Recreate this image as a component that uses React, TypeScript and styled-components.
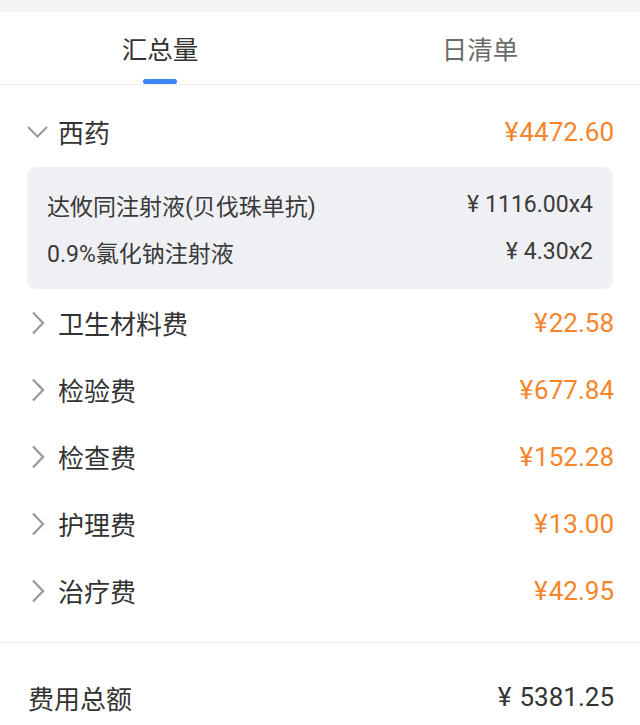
import React, { useState } from "react";
import styled, { createGlobalStyle } from "styled-components";

const GlobalStyle = createGlobalStyle`
  html, body { margin: 0; padding: 0; background: #ffffff; }
  body {
    font-family: "Roboto", "Noto Sans CJK SC", "Noto Sans", sans-serif;
    color: #333333;
    -webkit-font-smoothing: antialiased;
  }
  * { box-sizing: border-box; }
`;

const Page = styled.div`
  width: 640px;
  min-height: 725px;
  background: #ffffff;
  display: flex;
  flex-direction: column;
`;

const TopBand = styled.div`
  height: 12px;
  background: #f5f5f5;
`;

const Tabs = styled.div`
  display: grid;
  grid-template-columns: 1fr 1fr;
  height: 73px;
  border-bottom: 1px solid #eeeeee;
`;

const Tab = styled.div<{ $active?: boolean }>`
  position: relative;
  display: flex;
  align-items: center;
  justify-content: center;
  padding-bottom: 2px;
  font-size: 25.5px;
  color: ${(p) => (p.$active ? "#333333" : "#6b6b6b")};
  cursor: pointer;
`;

const TabBar = styled.span`
  position: absolute;
  left: 50%;
  bottom: 0;
  width: 34px;
  height: 5px;
  margin-left: -17px;
  border-radius: 3px;
  background: #3d86f6;
`;

const List = styled.div`
  display: flex;
  flex-direction: column;
  padding: 13px 0 18px;
  border-bottom: 1px solid #eeeeee;
`;

const Row = styled.div`
  display: flex;
  align-items: center;
  height: 67px;
  padding: 0 26px 0 27px;
`;

const Arrow = styled.span`
  width: 21px;
  height: 24px;
  display: flex;
  align-items: center;
  justify-content: center;
  margin-right: 10px;
  color: #9a9a9a;
`;

const Label = styled.span`
  flex: 1;
  font-size: 26px;
  color: #333333;
`;

const Amount = styled.span`
  font-size: 26px;
  color: #f5852b;
`;

const Yen = styled.span<{ $gap: number }>`
  margin-right: ${(p) => p.$gap}px;
`;

const Detail = styled.div`
  margin: 2px 27px 0;
  padding: 14px 20px;
  border-radius: 9px;
  background: #eff0f3;
  display: flex;
  flex-direction: column;
`;

const DetailLine = styled.div`
  display: flex;
  align-items: center;
  justify-content: space-between;
  height: 47px;
  font-size: 23px;
  color: #3a3a3a;
`;

const Footer = styled.div`
  display: flex;
  align-items: center;
  justify-content: space-between;
  padding: 36px 26px 0 28px;
  height: 72px;
  font-size: 26px;
  color: #333333;
`;

const ChevronDown = () => (
  <svg width="21" height="12" viewBox="0 0 21 12" fill="none">
    <polyline points="1,1 10.5,10.5 20,1" stroke="currentColor" strokeWidth="2" />
  </svg>
);

const ChevronRight = () => (
  <svg width="14" height="24" viewBox="0 0 14 24" fill="none">
    <polyline points="2,1.5 12,12 2,22.5" stroke="currentColor" strokeWidth="2.3" />
  </svg>
);

const Money = ({ value, gap }: { value: string; gap: number }) => (
  <>
    <Yen $gap={gap}>¥</Yen>
    {value}
  </>
);

type Item = { name: string; amount: string; open?: boolean; details?: { name: string; price: string }[] };

const items: Item[] = [
  {
    name: "西药",
    amount: "4472.60",
    open: true,
    details: [
      { name: "达攸同注射液(贝伐珠单抗)", price: "1116.00x4" },
      { name: "0.9%氯化钠注射液", price: "4.30x2" },
    ],
  },
  { name: "卫生材料费", amount: "22.58" },
  { name: "检验费", amount: "677.84" },
  { name: "检查费", amount: "152.28" },
  { name: "护理费", amount: "13.00" },
  { name: "治疗费", amount: "42.95" },
];

export default function App() {
  const [tab, setTab] = useState(0);
  return (
    <>
      <GlobalStyle />
      <Page>
        <TopBand />
        <Tabs>
          <Tab $active={tab === 0} onClick={() => setTab(0)}>
            汇总量
            {tab === 0 && <TabBar />}
          </Tab>
          <Tab $active={tab === 1} onClick={() => setTab(1)}>
            日清单
            {tab === 1 && <TabBar />}
          </Tab>
        </Tabs>
        <List>
          {items.map((it) => (
            <React.Fragment key={it.name}>
              <Row>
                <Arrow>{it.open ? <ChevronDown /> : <ChevronRight />}</Arrow>
                <Label>{it.name}</Label>
                <Amount>
                  <Money value={it.amount} gap={1} />
                </Amount>
              </Row>
              {it.open && it.details && (
                <Detail>
                  {it.details.map((d) => (
                    <DetailLine key={d.name}>
                      <span>{d.name}</span>
                      <span>
                        <Money value={d.price} gap={6} />
                      </span>
                    </DetailLine>
                  ))}
                </Detail>
              )}
            </React.Fragment>
          ))}
        </List>
        <Footer>
          <span>费用总额</span>
          <span>
            <Money value="5381.25" gap={8} />
          </span>
        </Footer>
      </Page>
    </>
  );
}
